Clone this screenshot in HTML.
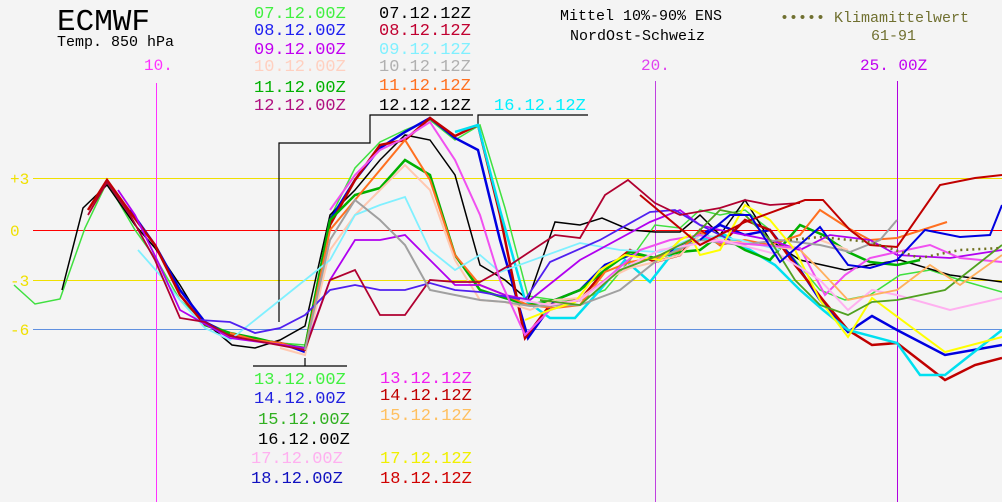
<!DOCTYPE html>
<html><head><meta charset="utf-8"><style>
html,body{margin:0;padding:0;background:#f4f4f4;}
svg{display:block;}
text{font-family:"Liberation Mono","DejaVu Sans Mono",monospace;}
.l{font-size:17px;}
</style></head><body>
<svg width="1002" height="502" viewBox="0 0 1002 502" xmlns="http://www.w3.org/2000/svg">
<rect width="1002" height="502" fill="#f4f4f4"/>
<line x1="33" y1="178.5" x2="1002" y2="178.5" stroke="#f0e000" stroke-width="1"/>
<line x1="33" y1="230.5" x2="1002" y2="230.5" stroke="#ff0000" stroke-width="1"/>
<line x1="33" y1="280.5" x2="1002" y2="280.5" stroke="#f0e000" stroke-width="1"/>
<line x1="33" y1="329.5" x2="1002" y2="329.5" stroke="#6090e0" stroke-width="1"/>
<line x1="156.5" y1="83" x2="156.5" y2="502" stroke="#ff30ff"/>
<line x1="655.5" y1="81" x2="655.5" y2="502" stroke="#c040e0"/>
<line x1="897.5" y1="81" x2="897.5" y2="502" stroke="#b000e0"/>
<g font-size="16" fill="#f0e000"><text x="10" y="184">+3</text><text x="10" y="236">0</text><text x="10" y="286">-3</text><text x="10" y="335">-6</text></g>
<g stroke="#000" fill="none" stroke-width="1.2">
<polyline points="279,322 279,143 370,143 370,115 473,115"/>
<polyline points="478,127 478,115 588,115"/>
<polyline points="253,366 347,366"/><line x1="305" y1="358" x2="305" y2="366"/>
</g>
<g fill="none" stroke-linejoin="miter">
<polyline stroke="#40e040" stroke-width="1.5" points="14,285 35,304 60,299 85,228 107,182 135,230 158,262 180,300 205,322 230,333 255,340 280,343 305,345 330,218 355,168 380,142 405,130 430,120 455,140 480,125 505,208 528,296 555,300 580,300 605,290 630,260 655,225 680,228 700,210 720,215 745,210 770,230 795,260 820,290 845,300 870,295 900,275 930,270 960,280 1002,292"/>
<polyline stroke="#000" stroke-width="1.5" points="62,290 83,208 107,185 135,225 155,248 180,285 200,318 232,345 255,348 280,340 305,326 330,215 355,190 380,160 405,135 430,140 455,175 480,265 505,280 528,300 555,222 580,225 602,218 630,230 655,232 680,232 700,215 720,235 745,200 770,240 800,260 845,270 870,265 900,260 950,275 1002,282"/>
<polyline stroke="#0000e0" stroke-width="2.5" points="130,210 155,245 180,290 205,322 230,335 255,340 280,343 305,352 330,220 355,180 380,148 405,132 430,118 455,138 478,150 500,240 528,338 555,300 580,290 605,265 630,255 655,260 680,245 700,235 720,225 745,235 770,230 795,262 820,300 848,332 872,316 897,330 945,355 1002,345"/>
<polyline stroke="#c00000" stroke-width="2.5" points="88,210 107,180 130,212 155,245 180,295 205,325 230,334 255,340 280,343 305,350 330,225 355,180 380,145 405,140 430,118 455,136 478,125 500,215 525,338 550,305 580,300 605,270 630,250 655,262 680,255 700,230 720,245 745,220 770,230 795,265 823,300 848,330 872,345 897,343 945,380 975,365 1002,358"/>
<polyline stroke="#00e0f0" stroke-width="2.5" points="455,132 478,125 500,210 525,300 550,318 575,318 600,290 625,260 650,282 675,250 700,240 725,235 750,250 775,265 800,290 823,310 848,330 897,343 920,375 945,375 1002,330"/>
<polyline stroke="#00b000" stroke-width="2.5" points="205,325 230,333 255,338 280,344 305,348 330,220 355,195 380,188 405,160 430,175 455,255 480,290 505,298 528,305 555,300 580,290 605,270 630,252 655,258 680,252 700,250 720,235 745,250 770,260 800,225 823,235 848,252 870,262 897,265 920,260"/>
<polyline stroke="#ff7020" stroke-width="2" points="230,333 255,340 280,343 305,350 330,230 355,200 380,170 405,140 430,180 455,255 480,285 505,295 528,305 555,308 580,305 605,272 630,262 655,258 680,250 700,232 720,245 745,240 770,245 800,235 820,210 848,228 870,240 897,238 947,222"/>
<polyline stroke="#ffc8b0" stroke-width="2" points="280,348 305,355 330,250 355,215 380,190 405,165 430,190 455,260 480,300 505,302 530,310 555,300 580,298 605,280 630,268 655,262 680,255 700,235 720,240 760,245 800,250 820,240 848,250"/>
<polyline stroke="#80f0ff" stroke-width="1.8" points="138,250 160,275 180,300 205,328 230,340 330,260 355,215 380,205 405,197 430,250 455,270 480,255 500,272 580,243 620,250 660,252 700,235 740,240 780,250"/>
<polyline stroke="#b000f0" stroke-width="1.8" points="118,190 135,215 158,262 180,310 230,338 305,348 330,280 355,240 380,240 405,235 430,260 455,285 480,285 505,295 530,300 580,260 650,222 680,210 700,225 720,230 770,240 800,250 830,235 870,240 897,255 950,258 1002,250"/>
<polyline stroke="#5020f0" stroke-width="1.8" points="200,320 230,322 255,333 280,328 305,315 330,290 355,285 380,290 405,290 430,283 455,290 480,292 525,300 550,262 600,240 650,212 675,210 700,225 730,240"/>
<polyline stroke="#b00030" stroke-width="1.8" points="88,215 107,182 130,215 155,260 180,318 205,322 230,336 305,350 330,280 355,270 380,315 405,315 430,280 455,282 480,282 510,265 555,235 580,238 605,195 628,180 655,203 680,215 720,208 745,200 770,205 800,203"/>
<polyline stroke="#a0a0a0" stroke-width="2" points="305,350 330,240 355,200 380,220 405,245 430,290 455,295 480,300 505,302 530,306 580,305 620,290 660,258 700,240 740,245 780,240 820,245 850,252 880,240 897,220"/>
<polyline stroke="#f050f0" stroke-width="2" points="330,210 355,175 380,150 405,138 430,122 455,160 480,215 500,280 525,335 550,310 580,300 605,280 640,250 670,240 700,235 720,242 760,245 800,248 825,295 845,275 870,258 897,252 930,245 960,258 1002,262"/>
<polyline stroke="#ffff00" stroke-width="2" points="525,320 550,310 575,302 600,270 625,255 660,260 680,240 690,235 700,255 720,250 745,205 770,220 795,250 820,300 848,337 872,298 945,352 1002,337"/>
<polyline stroke="#ffb0f0" stroke-width="2" points="520,300 550,305 580,300 620,270 660,250 720,240 780,255 820,280 848,310 872,290 897,295 950,310 1002,298"/>
<polyline stroke="#50a020" stroke-width="1.8" points="540,300 580,305 620,270 660,255 690,240 720,210 745,215 770,240 795,280 820,305 848,315 872,302 897,300 945,290 1002,245"/>
<polyline stroke="#ffb060" stroke-width="1.8" points="800,250 820,270 848,300 872,295 897,290 930,265 960,285 1002,255"/>
<polyline stroke="#c00000" stroke-width="2" points="640,195 700,245 745,222 805,200 823,200 850,230 870,245 897,247 940,185 975,178 1002,175"/>
<polyline stroke="#0000e0" stroke-width="2" points="700,240 730,215 750,215 780,262 820,227 848,265 870,268 897,260 925,230 960,237 990,235 1002,205"/>
<polyline stroke="#707020" stroke-width="2.5" stroke-dasharray="2,4" points="790,240 820,237 870,242 920,258 960,250 1002,248"/>
</g>
<text x="57" y="30" font-size="31" fill="#000" style="font-family:'Liberation Mono',monospace">ECMWF</text>
<text x="57" y="46" font-size="15" fill="#000">Temp. 850 hPa</text>
<text x="560" y="20" font-size="15" fill="#000">Mittel 10%-90% ENS</text>
<text x="570" y="40" font-size="15" fill="#000">NordOst-Schweiz</text>
<text x="780" y="22" font-size="15" fill="#707030">••••• Klimamittelwert</text>
<text x="871" y="40" font-size="15" fill="#707030">61-91</text>
<text x="144" y="70" font-size="16" fill="#ff30ff">10.</text>
<text x="641" y="70" font-size="16" fill="#e040f0">20.</text>
<text x="860" y="70" font-size="16" fill="#c000f0">25. 00Z</text>
<g class="l">
<text x="254" y="18" fill="#40f040">07.12.00Z</text>
<text x="254" y="35" fill="#2020f0">08.12.00Z</text>
<text x="254" y="54" fill="#c000f0">09.12.00Z</text>
<text x="254" y="71" fill="#ffd0c0">10.12.00Z</text>
<text x="254" y="92" fill="#00b000">11.12.00Z</text>
<text x="254" y="110" fill="#b01080">12.12.00Z</text>
<text x="379" y="18" fill="#000">07.12.12Z</text>
<text x="379" y="35" fill="#c00030">08.12.12Z</text>
<text x="379" y="54" fill="#80f0ff">09.12.12Z</text>
<text x="379" y="71" fill="#b0b0b0">10.12.12Z</text>
<text x="379" y="90" fill="#ff7020">11.12.12Z</text>
<text x="379" y="110" fill="#000">12.12.12Z</text>
<text x="494" y="110" fill="#00f0ff">16.12.12Z</text>
</g>
<g class="l">
<text x="254" y="384" fill="#40f040">13.12.00Z</text>
<text x="254" y="403" fill="#2020e0">14.12.00Z</text>
<text x="258" y="424" fill="#30b020">15.12.00Z</text>
<text x="258" y="444" fill="#000">16.12.00Z</text>
<text x="251" y="463" fill="#ffb0f0">17.12.00Z</text>
<text x="251" y="483" fill="#1010c0">18.12.00Z</text>
<text x="380" y="383" fill="#f020f0">13.12.12Z</text>
<text x="380" y="400" fill="#c00000">14.12.12Z</text>
<text x="380" y="420" fill="#ffc060">15.12.12Z</text>
<text x="380" y="463" fill="#f0f000">17.12.12Z</text>
<text x="380" y="483" fill="#d00000">18.12.12Z</text>
</g>
</svg>
</body></html>
